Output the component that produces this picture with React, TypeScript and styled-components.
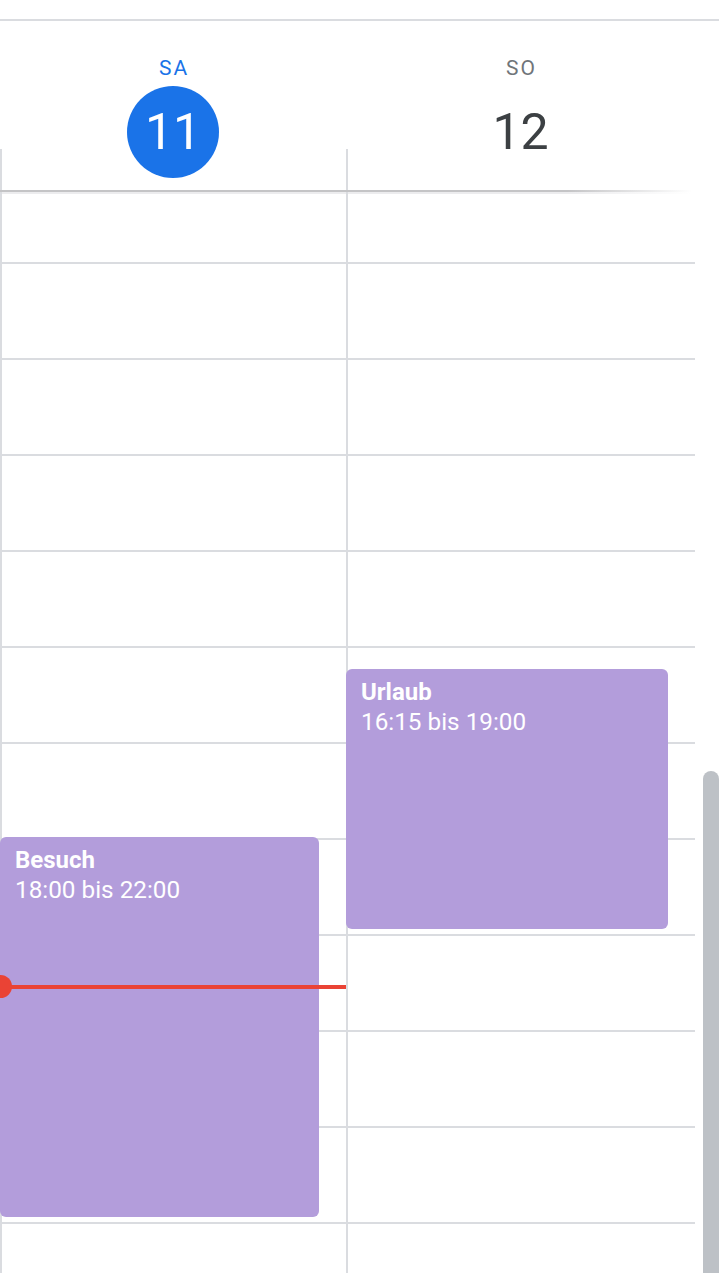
import React from 'react';
import styled, { createGlobalStyle } from 'styled-components';

const HOUR = 96;
const FIRST_HOUR = 12;
const FIRST_LINE = 70;

const toOffset = (h: number) => FIRST_LINE + (h - FIRST_HOUR) * HOUR;

interface CalEvent {
  title: string;
  range: string;
  start: number;
  end: number;
}

interface Day {
  label: string;
  date: number;
  today?: boolean;
  width: number;
  events: CalEvent[];
  now?: number;
}

const days: Day[] = [
  {
    label: 'SA',
    date: 11,
    today: true,
    width: 346,
    now: 19.54,
    events: [{ title: 'Besuch', range: '18:00 bis 22:00', start: 18, end: 22 }],
  },
  {
    label: 'SO',
    date: 12,
    width: 349,
    events: [{ title: 'Urlaub', range: '16:15 bis 19:00', start: 16.25, end: 19 }],
  },
];

const GlobalStyle = createGlobalStyle`
  html, body {
    margin: 0;
    padding: 0;
    background: #ffffff;
  }
  body {
    font-family: Roboto, "Liberation Sans", Arial, sans-serif;
  }
`;

const Page = styled.div`
  width: 719px;
  height: 1273px;
  overflow: hidden;
  background: #ffffff;
`;

const TopRule = styled.div`
  height: 19px;
  border-bottom: 2px solid #dadce0;
`;

const HeaderRow = styled.div`
  display: flex;
  width: 695px;
`;

const HeadCell = styled.div<{ $width: number }>`
  position: relative;
  width: ${({ $width }) => $width}px;
  height: 169px;
  display: flex;
  flex-direction: column;
  align-items: center;
  padding-top: 35px;
  box-sizing: border-box;

  &::before {
    content: '';
    position: absolute;
    left: 0;
    bottom: 0;
    width: 2px;
    height: 41px;
    background: #dadce0;
  }
`;

const DayLabel = styled.div<{ $today?: boolean }>`
  font-size: 21px;
  line-height: 24px;
  font-weight: 400;
  letter-spacing: 2px;
  padding-left: 2px;
  color: ${({ $today }) => ($today ? '#1a73e8' : '#70757a')};
`;

const DateBadge = styled.div<{ $today?: boolean }>`
  margin-top: 6px;
  width: 92px;
  height: 92px;
  border-radius: 50%;
  display: flex;
  align-items: center;
  justify-content: center;
  font-size: 50px;
  font-weight: 400;
  background: ${({ $today }) => ($today ? '#1a73e8' : 'transparent')};
  color: ${({ $today }) => ($today ? '#ffffff' : '#3c4043')};
  position: relative;
  z-index: 1;
`;

const HeaderDivider = styled.div`
  width: 692px;
  height: 2px;
  background: linear-gradient(to right, #c4c4c6 0, #c4c4c6 82%, rgba(196, 196, 198, 0) 100%);
  position: relative;

  &::after {
    content: '';
    position: absolute;
    left: 0;
    right: 0;
    top: 2px;
    height: 2px;
    background: linear-gradient(to right, #ececee 0, #ececee 82%, rgba(236, 236, 238, 0) 100%);
  }
`;

const BodyRow = styled.div`
  display: flex;
  height: 1081px;
`;

const Columns = styled.div`
  display: flex;
  width: 695px;
`;

const DayColumn = styled.div<{ $width: number }>`
  position: relative;
  width: ${({ $width }) => $width}px;
  background-image: linear-gradient(to right, #dadce0 0 2px, transparent 2px),
    linear-gradient(to bottom, #dadce0 0 2px, transparent 2px);
  background-size: 100% 100%, 100% ${HOUR}px;
  background-repeat: no-repeat, repeat-y;
  background-position: 0 0, 0 ${FIRST_LINE}px;
`;

const EventCard = styled.div`
  position: absolute;
  left: 0;
  right: 27px;
  box-sizing: border-box;
  padding: 8px 16px 9px 15px;
  border-radius: 6px;
  background: #b39ddb;
  color: #ffffff;
  overflow: hidden;
`;

const EventTitle = styled.div`
  font-size: 24px;
  line-height: 30px;
  font-weight: 700;
`;

const EventTime = styled.div`
  font-size: 24.3px;
  line-height: 30px;
  font-weight: 400;
`;

const NowLine = styled.div`
  position: absolute;
  left: 0;
  right: 0;
  height: 4px;
  background: #ea4335;
  z-index: 2;

  &::before {
    content: '';
    position: absolute;
    left: -11px;
    top: -10px;
    width: 23px;
    height: 23px;
    border-radius: 50%;
    background: #ea4335;
  }
`;

const ScrollTrack = styled.div`
  flex: 1;
  padding-left: 8px;
`;

const ScrollThumb = styled.div`
  margin-top: 579px;
  width: 16px;
  height: 560px;
  border-radius: 8px;
  background: #bdc1c6;
`;

export default function App() {
  return (
    <Page>
      <GlobalStyle />
      <TopRule />
      <HeaderRow>
        {days.map((d) => (
          <HeadCell key={d.date} $width={d.width}>
            <DayLabel $today={d.today}>{d.label}</DayLabel>
            <DateBadge $today={d.today}>{d.date}</DateBadge>
          </HeadCell>
        ))}
      </HeaderRow>
      <HeaderDivider />
      <BodyRow>
        <Columns>
          {days.map((d) => (
            <DayColumn key={d.date} $width={d.width}>
              {d.events.map((ev) => (
                <EventCard
                  key={ev.title}
                  style={{
                    top: Math.round(toOffset(ev.start)) - 1,
                    height: (ev.end - ev.start) * HOUR - 4,
                  }}
                >
                  <EventTitle>{ev.title}</EventTitle>
                  <EventTime>{ev.range}</EventTime>
                </EventCard>
              ))}
              {d.now !== undefined && (
                <NowLine style={{ top: Math.round(toOffset(d.now)) - 1 }} />
              )}
            </DayColumn>
          ))}
        </Columns>
        <ScrollTrack>
          <ScrollThumb />
        </ScrollTrack>
      </BodyRow>
    </Page>
  );
}
